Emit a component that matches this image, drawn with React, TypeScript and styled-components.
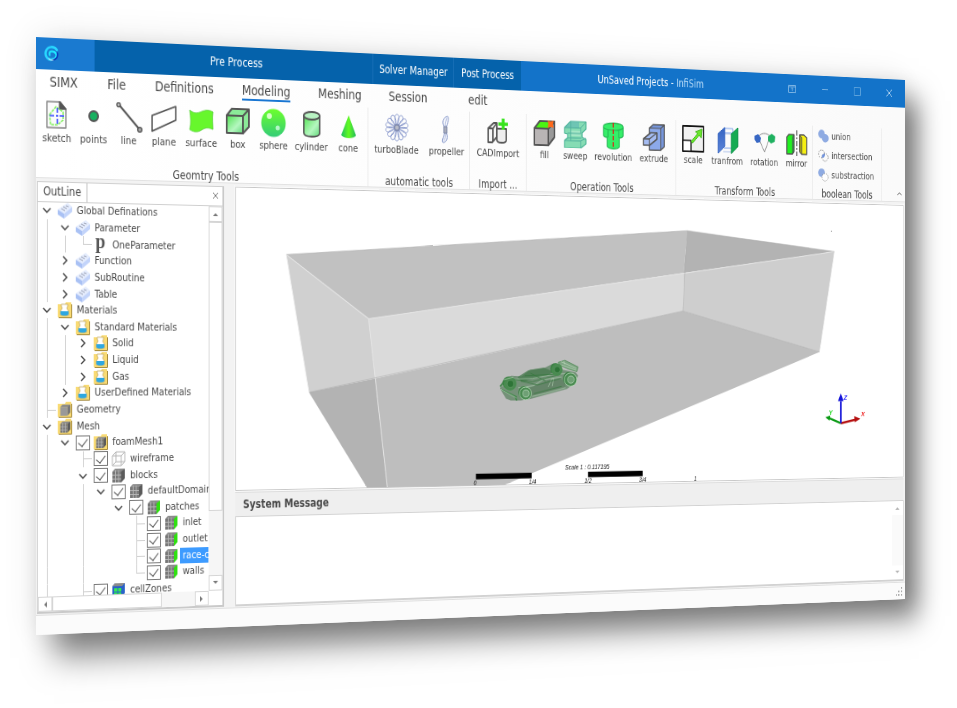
import React from "react";
import styled, { createGlobalStyle, css } from "styled-components";

const uiFont = `"DejaVu Sans Condensed", "DejaVu Sans", Tahoma, sans-serif`;

const GlobalStyle = createGlobalStyle`
  * { box-sizing: border-box; }
  body { margin: 0; background: #fff; overflow: hidden; }
  button, input, h1, h2, p { font: inherit; color: inherit; margin: 0; padding: 0; }
  button { background: none; border: 0; cursor: pointer; }
`;

/* ---------- stage and window ---------- */

const Stage = styled.main`
  min-height: 100vh;
  padding: 37px 0 0 36px;
  overflow: hidden;
`;

const Window = styled.div`
  width: 115vw;
  height: 84.5vh;
  display: flex;
  flex-direction: column;
  transform-origin: 0 54.4%;
  transform: perspective(315vw) rotateY(24.6deg);
  background: #f3f3f3;
  color: #484848;
  font: 11px/14px ${uiFont};
  font-stretch: condensed;
  box-shadow: 20px 22px 32px rgba(0, 0, 0, 0.5), 0 0 36px rgba(0, 0, 0, 0.1);
`;

/* ---------- title bar ---------- */

const TitleBar = styled.header`
  flex: 0 0 32px;
  display: flex;
  background: #1373c9;
  color: #fff;
  font-size: 12px;
`;

const Brand = styled.div`
  width: 65px;
  padding-left: 9px;
  display: flex;
  align-items: center;
  background: #1a7ad0;
`;

const Stages = styled.nav`
  display: flex;
  background: #0562ab;
`;

const StageTab = styled.button<{ $w: number }>`
  width: ${(p) => p.$w}px;
  white-space: nowrap;
  & + & { border-left: 1px solid #1a70b8; }
`;

const WindowTitle = styled.h1`
  flex: 1;
  align-self: center;
  text-align: center;
  font-weight: 400;
  span { color: #b9dcf8; }
`;

const WindowButton = styled.button`
  width: 46px;
  display: grid;
  place-items: center;
  color: #cfe4f6;
`;

/* ---------- ribbon ---------- */

const Menu = styled.nav`
  flex: 0 0 25px;
  display: flex;
  gap: 33px;
  padding: 3px 15px 0;
  background: linear-gradient(90deg, #fff, #fafafa);
  font-size: 14px;
  line-height: 18px;
`;

const MenuItem = styled.button<{ $active?: boolean; $wide?: boolean }>`
  height: 20px;
  border-bottom: 2px solid ${(p) => (p.$active ? "#1976d2" : "transparent")};
  ${(p) => p.$wide && css`margin-right: 18px;`}
`;

const Ribbon = styled.section`
  flex: 0 0 84px;
  display: flex;
  background: linear-gradient(90deg, #fff, #fafafa);
  border-bottom: 1px solid #e2e2e2;
`;

const Group = styled.section<{ $w: number }>`
  width: ${(p) => p.$w}px;
  height: 83px;
  display: flex;
  flex-direction: column;
  justify-content: space-between;
  border-right: 1px solid #e8e8e8;
`;

const GroupTools = styled.div`
  display: flex;
  justify-content: center;
  padding-top: 5px;
`;

const GroupName = styled.h2`
  font-weight: 400;
  font-size: 12px;
  line-height: 12px;
  text-align: center;
  white-space: nowrap;
`;

const Tool = styled.button<{ $w: number }>`
  width: ${(p) => p.$w}px;
  display: flex;
  flex-direction: column;
  align-items: center;
  gap: 2px;
  white-space: nowrap;
  svg { width: 30px; height: 30px; }
`;

const BooleanList = styled.div`
  display: flex;
  flex-direction: column;
  gap: 7px;
  padding: 4px 0 0 7px;
`;

const BooleanTool = styled.button`
  display: flex;
  align-items: center;
  gap: 4px;
  white-space: nowrap;
  svg { width: 15px; height: 15px; }
`;

const Collapse = styled.button`
  margin: auto 4px 6px auto;
  line-height: 0;
`;

/* ---------- body ---------- */

const Body = styled.div`
  flex: 1;
  min-height: 0;
  display: flex;
  gap: 13px;
  padding: 3px 2px 1px 1px;
`;

const Dock = styled.aside`
  width: 212px;
  display: flex;
  flex-direction: column;
  background: #fff;
  border: 1px solid #cfcfcf;
  border-right: 2px solid #c9c9c9;
  border-bottom: 2px solid #c9c9c9;
`;

const DockHead = styled.div`
  flex: 0 0 19px;
  display: flex;
  justify-content: space-between;
  align-items: center;
  padding-right: 4px;
  border-bottom: 1px solid #cfcfcf;
`;

const DockTab = styled.h2`
  height: 19px;
  padding: 2px 6px;
  font-weight: 400;
  font-size: 12px;
  border-right: 1px solid #bdbdbd;
  background: #fff;
`;

const TreeArea = styled.div`
  flex: 1;
  min-height: 0;
  display: flex;
`;

const TreeViewport = styled.div`
  flex: 1;
  min-width: 0;
  overflow: hidden;
`;

const Tree = styled.ul`
  list-style: none;
  margin: 0;
  padding: 0;
  height: calc(100% + 4px);
  display: flex;
  flex-direction: column;
`;

const TreeRow = styled.li`
  flex: 1;
  min-height: 0;
  display: flex;
  align-items: center;
  white-space: nowrap;
`;

const Slot = styled.span`
  flex: 0 0 20px;
  align-self: stretch;
  display: flex;
  align-items: center;
  justify-content: center;
  svg { flex: none; overflow: visible; }
`;

const Guide = styled.span<{ $kind: string }>`
  flex: 0 0 20px;
  align-self: stretch;
  display: flex;
  flex-direction: column;
  padding-left: 10px;
  &::before, &::after {
    content: "";
    flex: 1;
    border-left: 1px solid ${(p) => (p.$kind === " " ? "transparent" : "#d0d0d0")};
  }
  &::before { ${(p) => (p.$kind === "T" || p.$kind === "L") && css`border-bottom: 1px solid #d0d0d0;`} }
  &::after { ${(p) => p.$kind === "L" && css`border-left-color: transparent;`} }
`;

const Expander = styled.button`
  flex: 0 0 20px;
  height: 14px;
  display: grid;
  place-items: center;
`;

const Tick = styled.input`
  appearance: none;
  width: 16px;
  height: 15px;
  border: 1px solid #777;
  background: #fff;
  display: grid;
  place-items: center;
  &:checked::after {
    content: "";
    width: 5px;
    height: 9px;
    margin-top: -2px;
    border: solid #555;
    border-width: 0 1px 1px 0;
    transform: rotate(40deg);
  }
`;

const NodeLabel = styled.label<{ $selected?: boolean }>`
  line-height: 16px;
  padding: 0 2px 0 3px;
  ${(p) => p.$selected && css`background: #3d9bff; color: #fff; padding-right: 40px;`}
`;

const VBar = styled.div<{ $faint?: boolean }>`
  flex: 0 0 16px;
  display: flex;
  flex-direction: column;
  justify-content: space-between;
  background: #f6f6f6;
  opacity: ${(p) => (p.$faint ? 0.55 : 1)};
`;

const HBar = styled.div`
  flex: 0 0 15px;
  display: flex;
  margin-right: 16px;
  background: #f6f6f6;
`;

const BarButton = styled.button<{ $flat?: boolean }>`
  flex: 0 0 16px;
  min-height: 15px;
  display: grid;
  place-items: center;
  border: 1px solid ${(p) => (p.$flat ? "#fff" : "#d5d5d5")};
  background: #fff;
`;

const Thumb = styled.div<{ $grow: number }>`
  flex: ${(p) => p.$grow};
  background: #fff;
  border: 1px solid #d5d5d5;
`;

const Rest = styled.div<{ $grow: number }>`
  flex: ${(p) => p.$grow};
`;

const Work = styled.div`
  flex: 1;
  min-width: 0;
  display: flex;
  flex-direction: column;
`;

const ViewFrame = styled.section`
  flex: 318;
  min-height: 0;
  border: 1px solid #c8c8c8;
  outline: 1px solid #fafafa;
  background: #fff;
  svg { display: block; width: 100%; height: 100%; }
`;

const MessageTitle = styled.h2`
  flex: 0 0 24px;
  margin-top: 1px;
  padding: 5px 9px;
  border-top: 1px solid #dcdcdc;
  background: #efefef;
  font-weight: 700;
  font-size: 12px;
`;

const MessageBox = styled.section`
  flex: 92;
  display: flex;
  justify-content: flex-end;
  background: #fff;
  border: 1px solid #d2d2d2;
  border-bottom-width: 2px;
`;

const StatusBar = styled.footer`
  flex: 0 0 20px;
  display: flex;
  justify-content: flex-end;
  align-items: center;
  padding-right: 3px;
  border-top: 1px solid #e0e0e0;
  background: #fbfbfb;
`;

/* ---------- ribbon icons ---------- */

const S = "#555";

const Defs = () => (
  <svg width="0" height="0" style={{ display: "block", height: 0 }} aria-hidden="true">
    <defs>
      <linearGradient id="gGreen" x1="0" y1="0" x2="1" y2="1">
        <stop offset="0" stopColor="#4ee24e" /><stop offset=".6" stopColor="#b5f7c0" /><stop offset="1" stopColor="#5fd878" />
      </linearGradient>
      <linearGradient id="gSphere" x1="0" y1="0" x2="0" y2="1">
        <stop offset="0" stopColor="#6cff2c" /><stop offset="1" stopColor="#33cc77" />
      </linearGradient>
      <linearGradient id="gCone" x1="0" y1="0" x2="1" y2="0">
        <stop offset="0" stopColor="#1fc060" /><stop offset=".5" stopColor="#62fb20" /><stop offset="1" stopColor="#22b95c" />
      </linearGradient>
      <linearGradient id="gBlue" x1="0" y1="0" x2="0" y2="1">
        <stop offset="0" stopColor="#3565c4" /><stop offset="1" stopColor="#5c84d8" />
      </linearGradient>
    </defs>
  </svg>
);

const Icon = ({ children }: { children: React.ReactNode }) => (
  <svg viewBox="0 0 30 30" fill="none" stroke={S} strokeWidth="1.4" strokeLinejoin="round" aria-hidden="true">{children}</svg>
);

const petals = Array.from({ length: 14 }, (_, i) => (i * 360) / 14);

const icons: Record<string, React.ReactNode> = {
  sketch: (
    <Icon>
      <path d="M4 2h15l6 7v19H4z" fill="#fbfbfb" stroke="#888" />
      <path d="M18 2l7 7h-7z" fill="#555" />
      <path d="M7 15l7-8 8 5v8l-6 5H8z" stroke="#83ef62" strokeWidth="1.500" strokeDasharray="3 1" />
      <path d="M15.500 8v16M7 16h17" stroke="#3b4cff" strokeWidth="1.600" strokeDasharray="5 2 2 2" />
    </Icon>
  ),
  points: <Icon><circle cx="15" cy="15" r="5" fill="#18b060" stroke="#555" strokeWidth="2" /></Icon>,
  line: (
    <Icon>
      <path d="M3 2l24 25" strokeWidth="2" />
      <circle cx="3" cy="2.500" r="2" fill="#ccc" /><circle cx="27" cy="27" r="2.400" fill="#aaa" />
    </Icon>
  ),
  plane: <Icon><path d="M1 12L28 2v14L1 28z" fill="#fff" strokeWidth="1.600" /></Icon>,
  surface: (
    <Icon>
      <path d="M1 5c6 4 9 3 14 1s9-2 13 0c-1 7 0 13 0 18-8-3-11 0-15 2s-8 1-12-1c2-7 1-13 0-20z" fill="#67f72c" stroke="#55ce38" strokeWidth=".7" />
    </Icon>
  ),
  box: (
    <Icon>
      <path d="M2 9h19v18H2z" fill="url(#gGreen)" strokeWidth="2" />
      <path d="M2 9l6-7h20l-7 7zM21 9l7-7v18l-7 7z" fill="#8bea98" strokeWidth="2" />
    </Icon>
  ),
  sphere: (
    <Icon>
      <circle cx="15" cy="15" r="14.500" fill="url(#gSphere)" stroke="none" />
      <circle cx="10" cy="8" r="3" fill="#d8ffc8" stroke="none" /><circle cx="20" cy="20" r="2.500" fill="#b5f7c8" stroke="none" />
    </Icon>
  ),
  cylinder: (
    <Icon>
      <path d="M6 6v18c0 5 19 5 19 0V6z" fill="url(#gGreen)" strokeWidth="1.800" />
      <ellipse cx="15.500" cy="6" rx="9.500" ry="4" fill="#b9f3c3" strokeWidth="1.800" />
    </Icon>
  ),
  cone: <Icon><path d="M15 4L6 25c3 4 15 4 18 0z" fill="url(#gCone)" stroke="none" /></Icon>,
  turboBlade: (
    <Icon>
      <g stroke="#7f90c8" strokeWidth=".8">
        {petals.map((a) => (
          <path key={a} d="M15 12C11 7 12 1 15 1s4 5 0 11z" transform={`rotate(${a} 15 15)`} />
        ))}
      </g>
      <circle cx="15" cy="15" r="3" fill="#b9bcc8" stroke="#7d87aa" />
    </Icon>
  ),
  propeller: (
    <Icon>
      <path d="M12 13C8 8 10 2 16 1c2 1 0 8-2 12zM12 18c-1 6-4 9-2 11 5 0 7-6 4-11z" stroke="#8294c8" strokeWidth="1" fill="#f4f6fc" />
      <path d="M13 12c0-4 1-7 2-9M13 18c1 4 0 7-2 9" stroke="#9aa8d4" strokeWidth=".8" />
      <path d="M11 12h4v7h-4z" fill="#a9adba" stroke="#7d87aa" strokeWidth="1" />
    </Icon>
  ),
  CADImport: (
    <Icon>
      <path d="M2 12v15h5l6-6V6H9z" fill="#f5f5f5" strokeWidth="1.800" />
      <path d="M2 12h6l5-6M8 12v14" strokeWidth="1.800" />
      <path d="M13 12v12c0 4 12 4 12 0V12z" fill="#eee" strokeWidth="1.800" />
      <path d="M21 1v12M15 7h12" stroke="#37e31d" strokeWidth="3.600" />
    </Icon>
  ),
  fill: (
    <Icon>
      <path d="M2 10h18v18H2z" fill="#b9b5b5" strokeWidth="2" />
      <path d="M20 10l8-8v17l-8 9z" fill="#999" strokeWidth="2" />
      <path d="M2 10l7-8h19l-8 8z" fill="#4af312" strokeWidth="2" />
      <path d="M20 2l3 1 3-1-1 3 1 3-3-1-3 1 1-3z" fill="#ff6a1c" stroke="#ff6a1c" />
    </Icon>
  ),
  sweep: (
    <Icon>
      <path d="M1 8l8-7h20v8l-5 4v5l5 2v5l-7 5H1v-8l4-3v-4l-4-1z" fill="#86dcb4" stroke="#4ab494" strokeWidth="1.200" />
      <path d="M9 1h11v7H1z" fill="#5fb5b4" stroke="none" opacity=".6" />
      <path d="M9 11h13v6H9z" fill="#a5e6c6" stroke="none" />
      <path d="M1 8h21l7-7M22 8v6M5 14h17M5 19h18M1 22h21v8M22 22l7-3M9 1v21" stroke="#4fae9c" strokeWidth="1" />
    </Icon>
  ),
  revolution: (
    <Icon>
      <path d="M2 5c0-5 26-5 26 0v10c-1 2-5 2-5 2v10c-2 3-14 3-16 0V17s-4 0-5-2z" fill="#35ee68" stroke="#27b856" strokeWidth="1.300" />
      <path d="M2 6c3 4 22 4 26 0M8 8v9M22 8v9" stroke="#27b856" strokeWidth="1.200" />
      <path d="M15 1v28" stroke="#e81616" strokeWidth="1.600" strokeDasharray="5 2" />
    </Icon>
  ),
  extrude: (
    <Icon>
      <path d="M9 5l5-4h15v24l-5 4H9z" fill="#7696dc" strokeWidth="1.600" />
      <path d="M9 5h15v24H9z" fill="#8ca9ea" strokeWidth="1.200" />
      <path d="M24 5l5-4" strokeWidth="1.200" />
      <path d="M1 17l10-7h8v7L9 24H1z" fill="#a5bcf2" strokeWidth="1.600" />
      <path d="M1 17h8v7M9 17l10-7" strokeWidth="1.300" />
    </Icon>
  ),
  scale: (
    <Icon>
      <path d="M1 1h28v28H1z" fill="#f0f0f0" stroke="#151515" strokeWidth="1.800" />
      <path d="M1 17h11v12H1z" fill="#fff" stroke="#151515" strokeWidth="1.500" />
      <path d="M12 18L21 9l-3-2 9-3-1 10-3-3-9 9z" fill="#69e52c" stroke="#48b524" strokeWidth="1" />
    </Icon>
  ),
  tranfrom: (
    <Icon>
      <path d="M10 2h12v22H10M10 7h12" stroke="#7aa0ea" strokeWidth="1" />
      <path d="M9 8h12v20H9" stroke="#a8bde8" strokeWidth="1" />
      <path d="M2 8l9-7v21l-9 8z" fill="url(#gBlue)" stroke="#3867c0" strokeWidth="1" />
      <path d="M20 8l9-7v21l-9 8z" fill="#15ab52" stroke="#10914a" strokeWidth="1" />
    </Icon>
  ),
  rotation: (
    <Icon>
      <path d="M5 12C9 4 21 4 25 12M8 14l7 13 6-14" stroke="#888" strokeWidth="1" />
      <path d="M1 9l5-2 4 4-1 5-5 1-3-4z" fill="#3767c4" stroke="none" />
      <path d="M20 9l5-3 5 3-1 6-5 2-4-3z" fill="#1fb160" stroke="none" />
    </Icon>
  ),
  mirror: (
    <Icon>
      <path d="M1 9l3-3h7v19l-2 3H1z" fill="#20ef20" strokeWidth="1.500" />
      <path d="M11 6v19l-2 3V9z" fill="#1da53a" strokeWidth="1" />
      <path d="M15 1v29" stroke="#666" strokeDasharray="6 2 2 2" strokeWidth="1.500" />
      <path d="M19 6h6l4 3v19h-7l-3-3z" fill="#f5ee12" strokeWidth="1.500" />
      <path d="M19 6v19l3 3V9z" fill="#a5a211" strokeWidth="1" />
    </Icon>
  ),
};

const BooleanIcon = ({ kind }: { kind: string }) => (
  <svg viewBox="0 0 15 15" fill="none" aria-hidden="true">
    {kind === "union" && <path d="M5 0a4.500 4.500 0 0 1 4.500 5A4.800 4.800 0 1 1 5.500 10 4.800 4.800 0 1 1 5 0z" fill="#8fabe2" />}
    {kind === "intersection" && (
      <>
        <circle cx="5" cy="5.500" r="4.300" stroke="#777" strokeDasharray="1.500 1.500" /><circle cx="10" cy="9.500" r="4.300" stroke="#777" strokeDasharray="1.500 1.500" />
        <path d="M5.500 10Q5 5 10 5.500 10 10 5.500 10z" fill="#6f92dc" />
      </>
    )}
    {kind === "substraction" && (
      <>
        <circle cx="5" cy="5" r="4.800" fill="#8fabe2" />
        <circle cx="10" cy="10" r="4.300" fill="#fff" stroke="#888" strokeDasharray="1.500 1.500" />
      </>
    )}
  </svg>
);

/* ---------- tree icons ---------- */

const NodeIcon = ({ kind }: { kind: string }) => {
  if (kind === "param")
    return (
      <svg width="16" height="16" viewBox="0 0 16 16" aria-hidden="true">
        <text x="2" y="11" fontFamily="Liberation Serif, serif" fontWeight="700" fontSize="20" fill="#555">p</text>
      </svg>
    );
  const folder = (
    <>
      <path d="M0 2h8l1-2h6v15H0z" fill="#f9db74" />
      <path d="M15.500 2v13.500H1" fill="none" stroke="#a58a3c" />
    </>
  );
  const cube = (front: string, side: string, grid = true) => (
    <>
      <path d="M1 4l3-3h11l-3 3z" fill="#8b8b8b" />
      <path d="M11 4l4-3v10l-4 4z" fill={side} />
      <path d="M1 4h10v11H1z" fill={front} />
      {grid && <path d="M4.500 2.500V15M8 2.500V15M1 7.500h10M1 11.500h10" stroke="#b9b9b9" strokeWidth=".9" />}
    </>
  );
  const small = (front: string, side: string, grid = true) => (
    <g transform="translate(2 2) scale(.8)">{cube(front, side, grid)}</g>
  );
  return (
    <svg width="16" height="16" viewBox="0 0 16 16" fill="none" aria-hidden="true">
      {kind === "def" && (
        <>
          <path d="M0 7l11-7 5 4-9 7z" fill="#e4ecfd" /><path d="M0 7l7 4v5l-7-4z" fill="#a9c1f4" />
          <path d="M7 11l9-7v5l-9 7z" fill="#c3d4fa" />
          <path d="M4 6l4 2M6 4l4 2M9 3l3 1" stroke="#a0a6b8" strokeWidth="1" />
        </>
      )}
      {kind === "mat" && (
        <>
          {folder}
          <path d="M4 2h7v2l-1 2 2 3v4H3V9l2-3-1-2z" fill="#fff" stroke="#c0a868" strokeWidth=".8" />
          <path d="M3 9h9v3c-1 2-8 2-9 0z" fill="#2ea7e0" />
        </>
      )}
      {kind === "geo" && <>{folder}{small("#999", "#777", false)}</>}
      {kind === "mesh" && <>{folder}{small("#777", "#5b5b5b")}</>}
      {kind === "wire" && <path d="M1 5h10v10H1zM1 5l4-4h10v10H5V1M11 5l4-4M11 15l4-4M1 15l4-4" stroke="#b5b5b5" />}
      {kind === "block" && cube("#777", "#5b5b5b")}
      {kind === "patch" && cube("#777", "#2fe010")}
      {kind === "zone" && (
        <>
          <path d="M1 4l3-3h11v10l-3 4H1z" fill="#2a62c8" />
          <path d="M1 4l3-3h11l-3 3z" fill="#8b8b8b" />
          <path d="M3 6h3.500v3.500H3zM7.500 6H11v3.500H7.500zM3 10.500h3.500V14H3zM7.500 10.500H11V14H7.500z" fill="#36ee50" />
        </>
      )}
    </svg>
  );
};

const Chevron = ({ open }: { open: boolean }) => (
  <svg width="10" height="10" viewBox="0 0 10 10" fill="none" stroke="#444" strokeWidth="1.400" aria-hidden="true">
    <path d={open ? "M1 3l4 4 4-4" : "M3 1l4 4-4 4"} />
  </svg>
);

const Arrow = ({ d }: { d: string }) => (
  <svg width="6" height="6" viewBox="0 0 6 6" fill="#777" aria-hidden="true"><path d={d} /></svg>
);

/* ---------- data ---------- */

type ToolDef = [string, number];
const groups: { name: string; w: number; tools: ToolDef[] }[] = [
  { name: "Geomtry Tools", w: 385, tools: [["sketch", 41], ["points", 41], ["line", 38], ["plane", 42], ["surface", 44], ["box", 41], ["sphere", 43], ["cylinder", 47], ["cone", 42]] },
  { name: "automatic tools", w: 126, tools: [["turboBlade", 68], ["propeller", 56]] },
  { name: "Import ...", w: 72, tools: [["CADImport", 60]] },
  { name: "Operation Tools", w: 197, tools: [["fill", 38], ["sweep", 42], ["revolution", 58], ["extrude", 50]] },
  { name: "Transform Tools", w: 189, tools: [["scale", 41], ["tranfrom", 52], ["rotation", 50], ["mirror", 40]] },
];

/* guides: "|" line, "T" branch, "L" last branch, " " blank, one per level; state: open, closed or leaf */
type Row = { g: string; s?: "o" | "c"; k: string; t: string; check?: boolean; sel?: boolean };
const rows: Row[] = [
  { g: "", s: "o", k: "def", t: "Global Definations" },
  { g: "|", s: "o", k: "def", t: "Parameter" },
  { g: "||L", k: "param", t: "OneParameter" },
  { g: "|", s: "c", k: "def", t: "Function" },
  { g: "|", s: "c", k: "def", t: "SubRoutine" },
  { g: "|", s: "c", k: "def", t: "Table" },
  { g: "", s: "o", k: "mat", t: "Materials" },
  { g: "|", s: "o", k: "mat", t: "Standard Materials" },
  { g: "||", s: "c", k: "mat", t: "Solid" },
  { g: "||", s: "c", k: "mat", t: "Liquid" },
  { g: "||", s: "c", k: "mat", t: "Gas" },
  { g: "|", s: "c", k: "mat", t: "UserDefined Materials" },
  { g: "T", k: "geo", t: "Geometry" },
  { g: "", s: "o", k: "mesh", t: "Mesh" },
  { g: "|", s: "o", k: "mesh", t: "foamMesh1", check: true },
  { g: "| T", k: "wire", t: "wireframe", check: true },
  { g: "| ", s: "o", k: "block", t: "blocks", check: true },
  { g: "| |", s: "o", k: "block", t: "defaultDomain", check: true },
  { g: "| | ", s: "o", k: "patch", t: "patches", check: true },
  { g: "| |  T", k: "patch", t: "inlet", check: true },
  { g: "| |  T", k: "patch", t: "outlet", check: true },
  { g: "| |  T", k: "patch", t: "race-car", check: true, sel: true },
  { g: "| |  L", k: "patch", t: "walls", check: true },
  { g: "| T", k: "zone", t: "cellZones", check: true },
];

/* ---------- viewport drawing ---------- */

const Car = () => (
  <g transform="translate(601 346) scale(.43 .361) translate(-180 -108)" strokeLinejoin="round">
    <path d="M60 130l12-30 22-8 30 2 26-20 40-4 28-14 20 4 8 14 40 8 8 10-14 26-20 14-110 30-28 4-30 0-14-6z" fill="#6c8c70" opacity=".9" />
    <path d="M112 96l32-20 46-8 30 12-20 12-50 10-26 8z" fill="#47794e" opacity=".75" />
    <path d="M148 128l60-24 44 0 4 22-104 26z" fill="#5f7f63" opacity=".7" />
    <path d="M234 52l20-6 40 20-4 14-26-8-26-12z" fill="#7fa583" stroke="#4c8853" strokeWidth="2" />
    <path d="M242 50l46 20M244 60l44 16M250 48l4 10" stroke="#c7e3c8" strokeWidth="1.500" fill="none" />
    <path d="M156 154l40-9 60-17M66 124l34-22 56-2 64-12 36-2M114 128l46-6 28-18 56-8M204 126l10-24 6-2-4 24" fill="none" stroke="#b4d4b6" strokeWidth="1.500" />
    <path d="M80 100l76 10 84-22M122 108l50 12 70-20M150 84l46 24M134 92l90-4M160 146l84-22" fill="none" stroke="#38783f" strokeWidth="2" />
    {[[90, 116, 19], [136, 145, 19], [230, 74, 17], [271, 104, 20]].map(([x, y, r], i) => (
      <g key={i}>
        <ellipse cx={x - 5} cy={y - 3} rx={r - 2} ry={r} fill="#2f7a38" opacity=".8" />
        <ellipse cx={x} cy={y} rx={r - 1} ry={r} fill="#4a8a51" stroke={i % 2 ? "#b9dcba" : "#47904f"} strokeWidth="2" />
        <ellipse cx={x + 1} cy={y} rx={r / 2} ry={r / 1.800} fill={i % 2 ? "#6fa075" : "#2e7437"} stroke="#b5d7b7" strokeWidth={i % 2 ? 2 : 0.500} />
      </g>
    ))}
    <path d="M60 124l14-18M66 134l44 22M104 154l6 12" stroke="#3c8345" strokeWidth="4" fill="none" />
    <path d="M70 104l30-8M62 132l46 26" stroke="#c3dfc4" strokeWidth="1.500" fill="none" />
  </g>
);

const Scene = () => (
  <svg viewBox="228 144 869 315" preserveAspectRatio="xMidYMid slice" role="img" aria-label="Wind tunnel domain with race car">
    <path d="M287 214L795 180 790 227 386 280z" fill="#c1c1c1" />
    <path d="M795 180L999 200 790 227z" fill="#b3b3b3" />
    <path d="M386 280L790 227 789 269 394 343z" fill="#dadada" />
    <path d="M790 227L999 200 978 314 789 269z" fill="#cecece" />
    <path d="M287 214L386 280 394 343 314 357z" fill="#d0d0d0" />
    <path d="M314 357L394 343 410 466H390z" fill="#b3b3b3" />
    <path d="M394 343L789 269 978 314 530 466H410z" fill="#bebebe" />
    <path d="M287 214L386 280 999 200M386 280L410 466" fill="none" stroke="#e4e4e4" />
    <path d="M314 357L789 269 978 314M795 180L789 269M287 214L795 180 999 200" fill="none" stroke="#b0b0b0" strokeWidth=".6" />
    <path d="M287 214L314 357M999 200L978 314" fill="none" stroke="#eee" />
    <circle cx="995" cy="177" r=".7" fill="#888" />
    <Car />
    <path d="M519 445h71v6h-71zM663 445h72v6h-72z" fill="#000" />
    <g fontFamily="Liberation Sans, sans-serif" fontStyle="italic" fontSize="7" fill="#111" textAnchor="middle">
      <text x="662" y="442">Scale 1 : 0.117195</text>
      <text x="518" y="457">0</text><text x="591" y="457">1/4</text><text x="663" y="457">1/2</text>
      <text x="735" y="457">3/4</text><text x="806" y="457">1</text>
    </g>
    <path d="M1008 395L991 389" stroke="#0a9a14" strokeWidth="2.500" />
    <path d="M986 388l7-2-1 6z" fill="#0a9a14" />
    <path d="M1008 395L1029 391" stroke="#b50f0f" strokeWidth="2.500" />
    <path d="M1036 390l-9-3 1 7z" fill="#b50f0f" />
    <path d="M1008 395V370" stroke="#1414d8" strokeWidth="2.500" />
    <path d="M1008 361l-4 9h8z" fill="#1414d8" />
    <g fontFamily="Liberation Sans, sans-serif" fontStyle="italic" fontWeight="700" fontSize="8">
      <text x="1012" y="368" fill="#2a2aff">Z</text><text x="991" y="385" fill="#20d820">Y</text><text x="1037" y="387" fill="#ee2020">X</text>
    </g>
  </svg>
);

export default function App() {
  return (
    <Stage>
      <GlobalStyle />
      <Defs />
      <Window>
        <TitleBar>
          <Brand>
            <svg width="16" height="16" viewBox="0 0 16 16" fill="none" strokeLinecap="round" aria-label="InfiSim logo" role="img">
              <path d="M14 4C11 0 4 .500 2 5.500 0 11 5 15.500 9.500 13.500" stroke="#28d8ff" strokeWidth="2.400" />
              <path d="M6 9.500C5 6 8 4.500 11 6c4 2 3 6-1.500 7.500" stroke="#1ee8ff" strokeWidth="2" />
              <path d="M9.500 14c3.500 0 6-3 5-7" stroke="#0c35b8" strokeWidth="1.600" />
              <path d="M5 13c2 1.500 3 1.500 5 1" stroke="#fff" strokeWidth=".8" />
            </svg>
          </Brand>
          <Stages>
            <StageTab $w={325}>Pre Process</StageTab>
            <StageTab $w={100}>Solver Manager</StageTab>
            <StageTab $w={86}>Post Process</StageTab>
          </Stages>
          <WindowTitle>UnSaved Projects - <span>InfiSim</span></WindowTitle>
          <WindowButton aria-label="Ribbon display options">
            <svg width="11" height="11" viewBox="0 0 11 11" fill="none" stroke="#7db5e4"><path d="M.500 1.500h10v8H.500zM5.500 8V4M4 5.500L5.500 4 7 5.500M.500 3h10" /></svg>
          </WindowButton>
          <WindowButton aria-label="Minimize">
            <svg width="10" height="10" fill="none" stroke="#7db5e4"><path d="M1 4.500h8" /></svg>
          </WindowButton>
          <WindowButton aria-label="Maximize">
            <svg width="10" height="10" fill="none" stroke="#5fa4dc"><path d="M.500 .500h9v9h-9z" /></svg>
          </WindowButton>
          <WindowButton aria-label="Close">
            <svg width="10" height="10" fill="none" stroke="#c5dff5"><path d="M1 1l8 8M9 1L1 9" /></svg>
          </WindowButton>
        </TitleBar>

        <Menu>
          <MenuItem>SIMX</MenuItem>
          <MenuItem>File</MenuItem>
          <MenuItem>Definitions</MenuItem>
          <MenuItem $active>Modeling</MenuItem>
          <MenuItem>Meshing</MenuItem>
          <MenuItem $wide>Session</MenuItem>
          <MenuItem>edit</MenuItem>
        </Menu>

        <Ribbon>
          {groups.map((g) => (
            <Group key={g.name} $w={g.w}>
              <GroupTools>
                {g.tools.map(([name, w]) => (
                  <Tool key={name} $w={w}>{icons[name]}{name}</Tool>
                ))}
              </GroupTools>
              <GroupName>{g.name}</GroupName>
            </Group>
          ))}
          <Group $w={98}>
            <BooleanList>
              {["union", "intersection", "substraction"].map((n) => (
                <BooleanTool key={n}><BooleanIcon kind={n} />{n}</BooleanTool>
              ))}
            </BooleanList>
            <GroupName>boolean Tools</GroupName>
          </Group>
          <Collapse aria-label="Collapse ribbon">
            <svg width="8" height="6" fill="none" stroke="#555"><path d="M1 5l3-3 3 3" /></svg>
          </Collapse>
        </Ribbon>

        <Body>
          <Dock>
            <DockHead>
              <DockTab>OutLine</DockTab>
              <button aria-label="Close outline">
                <svg width="8" height="8" fill="none" stroke="#777"><path d="M1 1l6 6M7 1L1 7" /></svg>
              </button>
            </DockHead>
            <TreeArea>
              <TreeViewport>
                <Tree>
                  {rows.map((r, i) => (
                    <TreeRow key={r.t}>
                      {r.g.split("").map((k, j) => <Guide key={j} $kind={k} />)}
                      {r.s && <Expander aria-label={`Toggle ${r.t}`}><Chevron open={r.s === "o"} /></Expander>}
                      {r.check && <Slot><Tick type="checkbox" id={`node-${i}`} defaultChecked /></Slot>}
                      <Slot><NodeIcon kind={r.k} /></Slot>
                      <NodeLabel htmlFor={r.check ? `node-${i}` : undefined} $selected={r.sel}>{r.t}</NodeLabel>
                    </TreeRow>
                  ))}
                </Tree>
              </TreeViewport>
              <VBar>
                <BarButton aria-label="Scroll up"><Arrow d="M0 5l3-3 3 3z" /></BarButton>
                <Thumb $grow={300} />
                <Rest $grow={67} />
                <BarButton aria-label="Scroll down"><Arrow d="M0 1l3 3 3-3z" /></BarButton>
              </VBar>
            </TreeArea>
            <HBar>
              <BarButton aria-label="Scroll left"><Arrow d="M5 0L2 3l3 3z" /></BarButton>
              <Thumb $grow={120} />
              <Rest $grow={38} />
              <BarButton aria-label="Scroll right"><Arrow d="M1 0l3 3-3 3z" /></BarButton>
            </HBar>
          </Dock>
          <Work>
            <ViewFrame><Scene /></ViewFrame>
            <MessageTitle>System Message</MessageTitle>
            <MessageBox>
              <VBar $faint>
                <BarButton $flat aria-label="Scroll messages up"><Arrow d="M0 5l3-3 3 3z" /></BarButton>
                <BarButton $flat aria-label="Scroll messages down"><Arrow d="M0 1l3 3 3-3z" /></BarButton>
              </VBar>
            </MessageBox>
          </Work>
        </Body>
        <StatusBar>
          <svg width="10" height="10" fill="#aaa" aria-hidden="true"><path d="M7 0h2v2H7zM7 4h2v2H7zM7 8h2v2H7zM3 4h2v2H3zM3 8h2v2H3zM0 8h1v2H0z" /></svg>
        </StatusBar>
      </Window>
    </Stage>
  );
}
